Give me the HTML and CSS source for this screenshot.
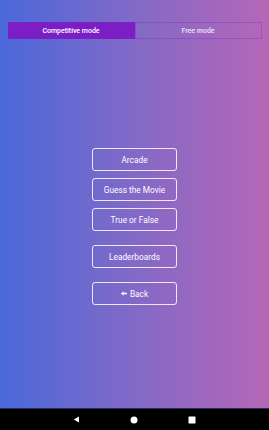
FILE: index.html
```html
<!DOCTYPE html>
<html lang="en">
<head>
    <meta charset="UTF-8">
    <meta name="viewport" content="width=device-width, initial-scale=1.0">
    <title>Movie Quiz</title>
    <link rel="stylesheet" href="styles.css">
</head>
<body>
    <div class="screen">
        <div class="content">
            <div class="mode-tabs">
                <div class="tab active">Competitive mode</div>
                <div class="tab">Free mode</div>
            </div>

            <div class="menu">
                <button class="menu-button">Arcade</button>
                <button class="menu-button">Guess the Movie</button>
                <button class="menu-button">True or False</button>
                <button class="menu-button spaced">Leaderboards</button>
                <button class="menu-button spaced">
                    <svg class="back-arrow" width="6" height="5" viewBox="0 0 6 5">
                        <path d="M0 2.5 L2.6 0.3 L2.6 1.7 L6 1.7 L6 3.3 L2.6 3.3 L2.6 4.7 Z" fill="#ffffff"/>
                    </svg>
                    Back
                </button>
            </div>
        </div>

        <!-- Android navigation bar -->
        <div class="navbar">
            <svg width="7" height="7" viewBox="0 0 7 7"><path d="M6 0.5 L6 6.5 L0.8 3.5 Z" fill="#ffffff"/></svg>
            <svg width="8" height="8" viewBox="0 0 8 8"><circle cx="4" cy="4" r="3.5" fill="#ffffff"/></svg>
            <svg width="8" height="8" viewBox="0 0 8 8"><rect x="0.5" y="0.5" width="7" height="7" rx="0.6" fill="#ffffff"/></svg>
        </div>
    </div>
</body>
</html>
```

FILE: styles.css
```css
body {
    margin: 0;
    padding: 0;
    font-family: Roboto, "Liberation Sans", sans-serif;
}
.screen {
    width: 269px;
    height: 430px;
    display: flex;
    flex-direction: column;
    overflow: hidden;
}
.content {
    flex: 1;
    background: linear-gradient(to right, #4a68da, #8369c7 50%, #b567b6);
    display: flex;
    flex-direction: column;
    align-items: center;
}
.mode-tabs {
    margin-top: 22px;
    width: 254px;
    height: 17px;
    display: flex;
}
.tab {
    flex: 1;
    display: flex;
    align-items: center;
    justify-content: center;
    font-size: 7px;
    font-weight: 500;
    color: #ece4f6;
    border: 1px solid rgba(135, 50, 200, 0.45);
    box-sizing: border-box;
}
.tab.active {
    background-color: #7c1ec6;
    border-color: #7a24c0;
    color: #ffffff;
}
.menu {
    margin-top: 109px;
    display: flex;
    flex-direction: column;
    align-items: center;
    gap: 7px;
}
.menu-button {
    width: 85px;
    height: 23px;
    padding: 0;
    background: transparent;
    border: 1px solid rgba(255, 255, 255, 0.85);
    border-radius: 3px;
    color: #ffffff;
    font-family: Roboto, "Liberation Sans", sans-serif;
    font-size: 8.3px;
    display: flex;
    align-items: center;
    justify-content: center;
    gap: 3px;
}
.menu-button.spaced {
    margin-top: 7px;
}
.navbar {
    height: 21px;
    border-top: 1px solid #2c2c58;
    background-color: #000000;
    display: flex;
    align-items: center;
    justify-content: center;
    gap: 50px;
}
```
